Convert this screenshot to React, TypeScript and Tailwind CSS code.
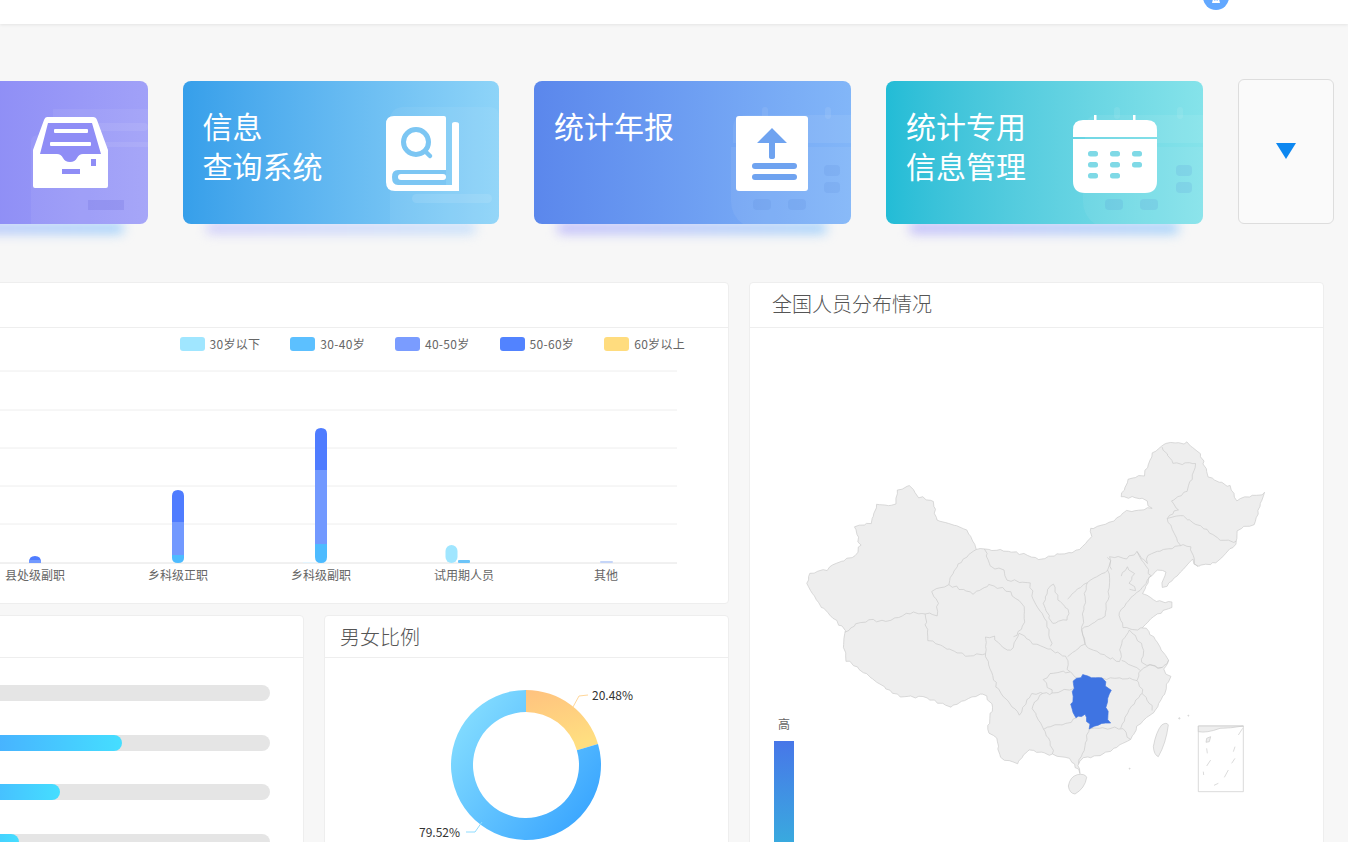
import React from "react";

const FONT = "font-['Noto_Sans_CJK_SC','Noto_Sans',sans-serif]";

function Ghost({ kind }: { kind: "tray" | "book" | "cal" }) {
  if (kind === "tray")
    return (
      <svg className="absolute right-0 top-0" width="117" height="143" viewBox="0 0 117 143" fill="#fff">
        <path d="M22 28 H117 V143 H0 V60 Q0 54 8 54 H22 Z" opacity=".06" />
        <rect x="30" y="42" width="87" height="8" rx="4" opacity=".08" />
        <rect x="60" y="61" width="57" height="5" opacity=".08" />
        <rect x="57" y="119" width="36" height="10" fill="#6d6cdc" opacity=".25" />
      </svg>
    );
  if (kind === "book")
    return (
      <svg className="absolute right-0 top-0" width="109" height="143" viewBox="0 0 109 143" fill="#fff">
        <path d="M14 26 H100 Q109 26 109 36 V143 H0 V40 Q0 26 14 26 Z" opacity=".06" />
        <rect x="22" y="113" width="80" height="9" rx="4.5" opacity=".1" />
      </svg>
    );
  return (
    <svg className="absolute right-0 top-0" width="120" height="143" viewBox="0 0 120 143" fill="#fff">
      <rect x="31" y="26" width="6" height="12" rx="3" opacity=".08" />
      <rect x="94" y="26" width="6" height="12" rx="3" opacity=".08" />
      <path d="M16 34 H120 V62 H2 V48 Q2 34 16 34 Z" opacity=".07" />
      <path d="M0 66 H120 V143 H12 Q0 135 0 120 Z" opacity=".06" />
      <rect x="93" y="84" width="16" height="11" rx="4" fill="#4f7fd8" opacity=".14" />
      <rect x="93" y="101" width="16" height="11" rx="4" fill="#4f7fd8" opacity=".14" />
      <rect x="22" y="118" width="18" height="11" rx="4" fill="#4f7fd8" opacity=".14" />
      <rect x="57" y="118" width="18" height="11" rx="4" fill="#4f7fd8" opacity=".14" />
    </svg>
  );
}

function TrayIcon() {
  return (
    <svg width="75" height="71" viewBox="0 0 75 71">
      <path d="M14 0 H60 Q63 0 64 3 L75 33 V69 Q75 71 73 71 H2 Q0 71 0 69 V33 L11 3 Q12 0 14 0 Z" fill="#fff" />
      <path d="M15 6 H59 L68 37 H50 Q46 37 44 41 Q42 45 37 45 Q32 45 30 41 Q28 37 24 37 H7 Z" fill="#8f8df6" />
      <rect x="21" y="12" width="34" height="4" rx="1" fill="#fff" />
      <rect x="17" y="25" width="41" height="4" rx="1" fill="#fff" />
      <rect x="29" y="52" width="18" height="5" fill="#8f8df6" />
      <rect x="58" y="42" width="5" height="7" fill="#8f8df6" />
    </svg>
  );
}

function BookIcon() {
  return (
    <svg width="73" height="75" viewBox="0 0 73 75">
      <path d="M8 0 H58 Q60 0 60 2 V75 H9 Q0 75 0 66 V8 Q0 0 8 0 Z" fill="#fff" />
      <path d="M66 8 Q66 6 69 6 Q73 6 73 8 V75 H60 V69 H66 Z" fill="#fff" />
      <path d="M60 54 H12 Q6 54 6 61 Q6 69 12 69 H60 Z" fill="#7cc6f3" />
      <rect x="12" y="58" width="48" height="6" rx="3" fill="#fff" />
      <circle cx="30" cy="26" r="12.5" fill="none" stroke="#7cc6f3" strokeWidth="5" />
      <path d="M39 35 L44 40" stroke="#7cc6f3" strokeWidth="4.5" strokeLinecap="round" />
    </svg>
  );
}

function UploadIcon() {
  return (
    <svg width="72" height="75" viewBox="0 0 72 75">
      <rect width="72" height="75" rx="3" fill="#fff" />
      <path d="M36 12 L51 27 H39 V41 Q39 43 36 43 Q33 43 33 41 V27 H21 Z" fill="#6fa3f0" />
      <rect x="16" y="47" width="45" height="6" rx="3" fill="#6fa3f0" />
      <rect x="16" y="58" width="45" height="6" rx="3" fill="#6fa3f0" />
    </svg>
  );
}

function CalendarIcon() {
  const dots = [
    [15, 36], [37, 36], [59, 36],
    [15, 47], [37, 47], [59, 47],
    [15, 58], [37, 58],
  ];
  return (
    <svg width="84" height="78" viewBox="0 0 84 78">
      <rect x="21" y="0" width="2.5" height="8" fill="#fff" />
      <rect x="60" y="0" width="2.5" height="8" fill="#fff" />
      <path d="M10 5 H74 Q84 5 84 15 V22 H0 V15 Q0 5 10 5 Z" fill="#fff" />
      <path d="M0 24 H84 V66 Q84 78 72 78 H12 Q0 78 0 66 Z" fill="#fff" />
      {dots.map(([x, y]) => (
        <rect key={`${x}-${y}`} x={x} y={y} width="10" height="5.5" rx="2.5" fill="#7fd9e6" />
      ))}
    </svg>
  );
}

// wobble map borders as a function of position, so shared edges stay together
const wobble = (x: number, y: number) =>
  Math.sin(x * 0.21 + y * 0.13) * 2 + Math.sin(x * 0.07 - y * 0.31) * 2;

function rough(points: string) {
  const n = points.trim().split(/\s+/).map(Number);
  const out: string[] = [];
  for (let i = 0; i + 3 < n.length; i += 2) {
    const steps = Math.max(1, Math.round(Math.hypot(n[i + 2] - n[i], n[i + 3] - n[i + 1]) / 12));
    for (let s = 0; s < steps; s++) {
      const x = n[i] + ((n[i + 2] - n[i]) * s) / steps;
      const y = n[i + 1] + ((n[i + 3] - n[i + 1]) * s) / steps;
      out.push(`${(x + wobble(x, y)).toFixed(1)},${(y + wobble(y + 17, x + 5)).toFixed(1)}`);
    }
  }
  const lx = n[n.length - 2];
  const ly = n[n.length - 1];
  out.push(`${(lx + wobble(lx, ly)).toFixed(1)},${(ly + wobble(ly + 17, lx + 5)).toFixed(1)}`);
  return out.join(" ");
}

function ChinaMap() {
  const outline =
    "50 460 60 430 110 420 130 405 195 375 210 345 195 290 245 280 260 225 315 225 325 180 360 168 385 200 430 215 440 270 490 285 530 300 560 355 585 358 640 362 700 372 745 388 800 375 870 360 905 320 900 295 960 280 1010 245 1085 235 1060 205 990 200 1015 150 1060 135 1090 70 1120 40 1190 38 1230 70 1255 140 1320 170 1340 210 1425 188 1410 230 1390 285 1340 300 1340 345 1310 365 1280 395 1225 410 1205 390 1130 470 1115 470 1130 425 1105 420 1075 445 1060 490 1100 515 1145 515 1145 530 1090 560 1060 590 1090 620 1135 690 1120 720 1140 740 1125 790 1090 850 1040 890 1020 930 950 970 880 985 865 1005 870 1030 840 985 790 975 720 960 680 1000 630 985 620 925 590 900 610 830 580 790 480 830 400 800 330 800 280 770 170 690 160 640 165 600 85 520 50 460";
  const borders = [
    "165 605 200 580 250 570 290 575 350 550 405 550 440 555 445 520 425 485 475 465 480 440 510 395 560 355",
    "475 465 550 490 600 465 650 480 705 530 700 590 670 620",
    "405 550 415 630 470 655 540 680 585 670 590 625 610 620 640 655 665 660 690 610",
    "585 670 620 770 625 780 650 810 690 855 725 790 760 790",
    "585 358 600 410 640 420 650 450 720 460 730 510 770 575 785 650",
    "690 610 730 640 770 655 830 680 835 720",
    "775 480 760 520 785 580 830 570 835 540 805 510 790 460 775 480",
    "830 510 890 455 875 600 885 640 855 660 835 680",
    "890 455 955 420 960 460 945 560 875 600",
    "955 420 960 380 1010 385 1040 365 1070 400 1075 375 1170 345 1130 265 1165 240",
    "955 380 965 420",
    "1040 365 1075 420 1080 440 1050 480 985 545",
    "990 440 1010 410 1030 430 1020 460 1040 480 1020 480",
    "1170 345 1200 350 1220 410",
    "1130 265 1170 255 1250 300 1290 330 1340 335",
    "1115 50 1150 100 1220 100 1190 180 1145 215 1165 240",
    "985 545 1000 590 1030 600 1060 590",
    "875 600 890 650 950 680 990 695 995 630 1020 600",
    "1020 600 1060 650 1055 700 1115 715 1135 690",
    "835 720 860 745 950 745 1010 745 1040 750 1050 720 995 690",
    "1040 750 1060 790 1045 800 1010 850 995 895",
    "1060 790 1090 840",
    "1050 720 1080 705 1115 715",
    "760 750 780 730 840 725",
    "725 825 760 790 790 790 850 775",
    "760 750 790 790",
    "725 825 745 870 760 895 830 880 860 860",
    "760 895 780 935 790 975",
    "900 895 880 960 865 1000",
    "900 895 1000 895 1020 930",
  ];
  const hunan =
    "850 750 880 735 905 742 940 745 948 770 960 780 950 830 958 880 925 882 900 895 885 855 855 860 842 825 850 800 850 750";
  const dashes = ["1250 955 1252 970", "1335 950 1330 965", "1262 990 1250 1008", "1335 985 1325 1000", "1240 1025 1241 1035", "1315 1020 1303 1042", "1285 1060 1272 1066", "1358 895 1345 915"];
  return (
    <svg width="490" height="380" viewBox="0 0 1470 1140" className="ml-[40px] mt-[102px]" fill="#eeeeee" stroke="#c8c8c8" strokeWidth="2" strokeLinejoin="round">
      <polygon points={rough(outline)} />
      {borders.map((b) => (
        <polyline key={b} points={rough(b)} fill="none" />
      ))}
      <polygon points={rough(hunan)} fill="#3f74e2" stroke="#3f74e2" />
      <path d="M835 1068 Q840 1040 862 1034 Q885 1030 890 1042 Q885 1075 855 1092 Q838 1090 835 1068 Z" />
      <path d="M1090 950 Q1098 905 1115 885 Q1130 875 1135 885 Q1128 940 1105 980 Q1092 975 1090 950 Z" />
      <rect x="1225" y="888" width="135" height="197" fill="none" />
      <path d="M1225 888 H1360 Q1320 895 1290 895 Q1250 910 1225 905 Z" />
      <path d="M1250 925 1262 920 1258 935 1248 937 Z" />
      {dashes.map((d) => (
        <polyline key={d} points={d} fill="none" />
      ))}
      <circle cx="1168" cy="865" r="2" />
      <circle cx="1195" cy="857" r="1.5" />
      <circle cx="1019" cy="1016" r="1.5" />
    </svg>
  );
}

function AgeChart() {
  const grid = [371, 410, 448, 486, 524];
  const labels: [number, string][] = [
    [35, "县处级副职"],
    [178, "乡科级正职"],
    [321, "乡科级副职"],
    [464, "试用期人员"],
    [606, "其他"],
  ];
  return (
    <svg width="729" height="221" viewBox="0 365 729 221" className="ml-[19px] mt-[4px]">
      {grid.map((y) => (
        <line key={y} x1="0" x2="677" y1={y} y2={y} stroke="#eeeeee" />
      ))}
      <line x1="0" x2="677" y1="563" y2="563" stroke="#e2e2e2" />

      <path d="M29 562 Q29 556 35 556 Q41 556 41 562 Z" fill="#4f7cff" />
      <rect x="29" y="560" width="12" height="3" fill="#7299ff" />

      <path d="M172 522 V496 Q172 490 178 490 Q184 490 184 496 V522 Z" fill="#4f7cff" />
      <rect x="172" y="522" width="12" height="33" fill="#7299ff" />
      <path d="M172 555 H184 V558 Q184 563 178 563 Q172 563 172 558 Z" fill="#4dbbff" />

      <rect x="303" y="562" width="12" height="1" fill="#e3f5ff" />
      <path d="M315 470 V434 Q315 428 321 428 Q327 428 327 434 V470 Z" fill="#4f7cff" />
      <rect x="315" y="470" width="12" height="74" fill="#7299ff" />
      <path d="M315 544 H327 V557 Q327 563 321 563 Q315 563 315 557 Z" fill="#4dbbff" />

      <rect x="445.5" y="545" width="12" height="18" rx="6" fill="#a0e6ff" />
      <rect x="458" y="560" width="12" height="3" rx="1" fill="#6cc4f8" />
      <rect x="600" y="561" width="13" height="2" rx="1" fill="#c5d5f8" />

      {labels.map(([x, t]) => (
        <text key={t} x={x} y="580" textAnchor="middle" fontSize="12" fill="#666666">
          {t}
        </text>
      ))}
    </svg>
  );
}

function Donut() {
  const cx = 75;
  const cy = 75;
  const R = 75;
  const r = 53;
  const a = (73.73 * Math.PI) / 180;
  const ox = cx + R * Math.sin(a);
  const oy = cy - R * Math.cos(a);
  const ix = cx + r * Math.sin(a);
  const iy = cy - r * Math.cos(a);
  return (
    <svg width="150" height="150" viewBox="0 0 150 150" className="overflow-visible">
      <defs>
        <linearGradient id="don-blue" x1="0.1" y1="0.2" x2="0.9" y2="0.8">
          <stop offset="0" stopColor="#80daff" />
          <stop offset="1" stopColor="#3da8ff" />
        </linearGradient>
        <linearGradient id="don-orange" x1="0" y1="0" x2="0.3" y2="1">
          <stop offset="0" stopColor="#ffc27f" />
          <stop offset="1" stopColor="#ffde80" />
        </linearGradient>
      </defs>
      <path d={`M${cx} ${cy - R} A${R} ${R} 0 0 1 ${ox} ${oy} L${ix} ${iy} A${r} ${r} 0 0 0 ${cx} ${cy - r} Z`} fill="url(#don-orange)" />
      <path d={`M${ox} ${oy} A${R} ${R} 0 1 1 ${cx} ${cy - R} L${cx} ${cy - r} A${r} ${r} 0 1 0 ${ix} ${iy} Z`} fill="url(#don-blue)" />
      <polyline points="122,17 128,6 137,5" fill="none" stroke="#ffd79a" />
      <polyline points="31,132 24,142 15,142" fill="none" stroke="#8fdcff" />
      <text x="141" y="9.5" fontSize="12" fill="#333333">20.48%</text>
      <text x="-32" y="146.5" fontSize="12" fill="#333333">79.52%</text>
    </svg>
  );
}

const legend = [
  { color: "bg-[#a0e6ff]", label: "30岁以下" },
  { color: "bg-[#5cc0ff]", label: "30-40岁" },
  { color: "bg-[#7a9cff]", label: "40-50岁" },
  { color: "bg-[#5283ff]", label: "50-60岁" },
  { color: "bg-[#ffdc7e]", label: "60岁以上" },
];

export default function App() {
  return (
    <div className={`h-[842px] w-[1348px] overflow-hidden bg-[#f7f7f7] ${FONT}`}>
      <div className="flex h-6 justify-end overflow-hidden bg-white pr-[119px] shadow-[0_1px_3px_rgba(0,0,0,0.08)]">
        <div className="-mt-[16px] flex h-[26px] w-[26px] items-end justify-center rounded-full bg-[#62a8ff] pb-[7px]">
          <svg width="8" height="4" viewBox="0 0 8 4">
            <path d="M0 4 L1 0 L3 2 L4 0 L5 2 L7 0 L8 4 Z" fill="#ffffff" />
          </svg>
        </div>
      </div>

      <div className="-ml-[169px] flex w-[1600px] gap-[35px] pt-[57px]">
        <div className="relative h-[143px] w-[316.5px]">
          <div className="absolute bottom-[-9px] left-[24px] h-[10px] w-[268px] bg-gradient-to-r from-[#b9b4fb] to-[#98ccfb] blur-[6px]" />
          <div className="relative flex h-full justify-between overflow-hidden rounded-lg bg-gradient-to-r from-[#7d7af3] to-[#a1a1f8] pl-5 pr-[40px]">
            <Ghost kind="tray" />
            <span />
            <div className="relative mt-[36px]"><TrayIcon /></div>
          </div>
        </div>

        <div className="relative h-[143px] w-[316.5px]">
          <div className="absolute bottom-[-9px] left-[24px] h-[10px] w-[268px] bg-gradient-to-r from-[#cac8fb] to-[#bfdcfb] blur-[6px]" />
          <div className="relative flex h-full justify-between overflow-hidden rounded-lg bg-gradient-to-r from-[#369fea] to-[#8ed4f8] pl-5 pr-[40px]">
            <Ghost kind="book" />
            <div className="relative pt-6 text-[30px] leading-[40px] text-white">信息<br />查询系统</div>
            <div className="relative mt-[35px]"><BookIcon /></div>
          </div>
        </div>

        <div className="relative h-[143px] w-[316.5px]">
          <div className="absolute bottom-[-9px] left-[24px] h-[10px] w-[268px] bg-gradient-to-r from-[#b9b4fb] to-[#98ccfb] blur-[6px]" />
          <div className="relative flex h-full justify-between overflow-hidden rounded-lg bg-gradient-to-r from-[#5b87ec] to-[#82b6f8] pl-5 pr-[43px]">
            <Ghost kind="cal" />
            <div className="relative pt-6 text-[30px] leading-[40px] text-white">统计年报</div>
            <div className="relative mt-[35px]"><UploadIcon /></div>
          </div>
        </div>

        <div className="relative ml-[0.5px] h-[143px] w-[317px]">
          <div className="absolute bottom-[-9px] left-[24px] h-[10px] w-[268px] bg-gradient-to-r from-[#b9b4fb] to-[#98ccfb] blur-[6px]" />
          <div className="relative flex h-full justify-between overflow-hidden rounded-lg bg-gradient-to-r from-[#22bcd6] to-[#85e3ea] pl-5 pr-[46px]">
            <Ghost kind="cal" />
            <div className="relative pt-6 text-[30px] leading-[40px] text-white">统计专用<br />信息管理</div>
            <div className="relative mt-[34px]"><CalendarIcon /></div>
          </div>
        </div>

        <div className="-mt-[2px] flex h-[145px] w-[96px] items-center justify-center rounded-md border border-[#dddddd] bg-[#fafafa]">
          <svg width="20" height="16" viewBox="0 0 20 16" className="-mt-[2px]">
            <path d="M0 0 H20 L10 16 Z" fill="#0d87f0" />
          </svg>
        </div>
      </div>

      <div className="-ml-5 mt-[58px] flex gap-5">
        <div className="flex w-[749px] flex-col gap-[11px]">
          <section className="h-[322px] rounded border border-[#eeeeee] bg-white">
            <div className="h-[45px] border-b border-[#eeeeee]" />
            <div className="-mt-px flex h-[34px] items-center justify-end gap-[30px] pr-[43px]">
              {legend.map((l) => (
                <div key={l.label} className="flex items-center gap-[5px] text-xs tracking-[0.3px] text-[#666666]">
                  <span className={`h-[14px] w-[25px] rounded-[3px] ${l.color}`} />
                  {l.label}
                </div>
              ))}
            </div>
            <AgeChart />
          </section>

          <div className="flex gap-5">
            <section className="h-[300px] w-[324px] rounded border border-[#eeeeee] bg-white">
              <div className="h-[42px] border-b border-[#eeeeee]" />
              <div className="ml-[-80px] flex w-[369px] flex-col gap-[33.5px] pt-[27px]">
                <div className="h-4 rounded-full bg-[#e5e5e5]" />
                <div className="h-4 rounded-full bg-[#e5e5e5]">
                  <div className="h-4 w-[221px] rounded-full bg-gradient-to-r from-[#4a90ff] to-[#45deff]" />
                </div>
                <div className="h-4 rounded-full bg-[#e5e5e5]">
                  <div className="h-4 w-[159px] rounded-full bg-gradient-to-r from-[#4a90ff] to-[#45deff]" />
                </div>
                <div className="h-4 rounded-full bg-[#e5e5e5]">
                  <div className="h-4 w-[118px] rounded-full bg-gradient-to-r from-[#4a90ff] to-[#45deff]" />
                </div>
              </div>
            </section>

            <section className="h-[300px] w-[405px] rounded border border-[#eeeeee] bg-white">
              <div className="flex h-[42px] items-center border-b border-[#eeeeee] pl-[15px] text-xl font-light text-[#555555]">
                男女比例
              </div>
              <div className="ml-[126px] mt-[32px]">
                <Donut />
              </div>
            </section>
          </div>
        </div>

        <section className="relative h-[640px] w-[575px] rounded border border-[#eeeeee] bg-white">
          <div className="flex h-[45px] items-center border-b border-[#eeeeee] pb-[2px] pl-[22px] text-xl font-light text-[#555555]">
            全国人员分布情况
          </div>
          <ChinaMap />
          <div className="absolute left-[24px] top-[432px] flex w-5 flex-col items-center">
            <span className="text-xs leading-[17px] text-[#666666]">高</span>
            <div className="mt-[9px] h-[150px] w-5 bg-gradient-to-b from-[#4776e8] to-[#2fc0d8]" />
          </div>
        </section>
      </div>
    </div>
  );
}
